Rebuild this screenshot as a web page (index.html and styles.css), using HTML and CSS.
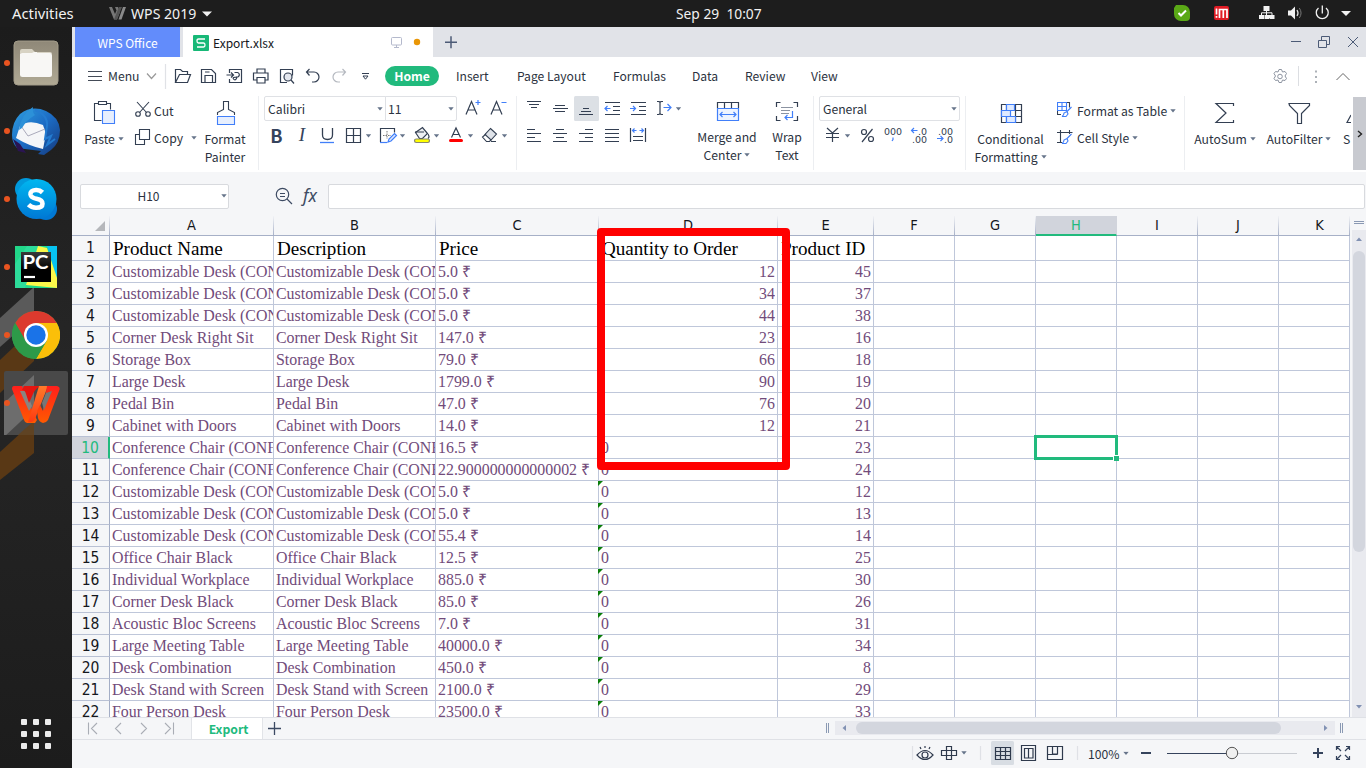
FILE: index.html
```html
<!DOCTYPE html>
<html lang="en">
<head>
<meta charset="utf-8">
<title>Export.xlsx - WPS Office</title>
<link rel="stylesheet" href="styles.css">
</head>
<body>
<svg class="defs" width="0" height="0">
  <defs>
    <linearGradient id="gFiles" x1="0" y1="0" x2="0" y2="1"><stop offset="0" stop-color="#8f8878"/><stop offset="1" stop-color="#b0a994"/></linearGradient>
    <linearGradient id="gBird" x1="0" y1="0" x2="1" y2="1"><stop offset="0" stop-color="#2f9fe0"/><stop offset=".5" stop-color="#1c6bc4"/><stop offset="1" stop-color="#15397c"/></linearGradient>
    <linearGradient id="gSkype" x1="0" y1="0" x2="0" y2="1"><stop offset="0" stop-color="#00b7f0"/><stop offset="1" stop-color="#0078d4"/></linearGradient>
    <linearGradient id="gWps" x1="0" y1="0" x2="0" y2="1"><stop offset="0" stop-color="#ff1f1c"/><stop offset="1" stop-color="#ff5a00"/></linearGradient>
    <linearGradient id="gWps2" x1="0" y1="0" x2="0" y2="1"><stop offset="0" stop-color="#ff7a2a"/><stop offset="1" stop-color="#ff3a10"/></linearGradient>
    <linearGradient id="gPc" x1="0" y1="0" x2="0" y2="1"><stop offset="0" stop-color="#3a3a3a"/><stop offset=".6" stop-color="#000"/></linearGradient>
    <symbol id="caret" viewBox="0 0 6 4"><path d="M.3 .3h5.4L3 3.4z" fill="#66748a" stroke="none"/></symbol>
  </defs>
</svg>

<header class="topbar">
  <span class="activities">Activities</span>
  <svg class="wps-mini" width="17" height="13" viewBox="0 0 17 13"><path d="M0 0h3l3 7 1.500-3.500L6 0h3l2 5-3 7.500H5z" fill="#777"/><path d="M5 12.500 10 0h3L8 12.500z" fill="#555"/><path d="M9.500 12.500 14 0h3l-4.500 12.500z" fill="#8a8a8a"/></svg>
  <span class="appname">WPS 2019</span>
  <svg width="10" height="6" viewBox="0 0 10 6"><path d="M0 .5h10L5 5.500z" fill="#f2f2f2"/></svg>
  <span class="clock">Sep 29&nbsp; 10:07</span>
  <svg class="tray" width="196" height="27" viewBox="1170 0 196 27">
    <path d="M1176 5h7a7 7 0 0 1 7 7v5a4 4 0 0 1-4 4h-5a7 7 0 0 1-7-7V8z" fill="#5aa816"/><path d="m1178.500 13 2.500 2.500 5-5" fill="none" stroke="#fff" stroke-width="2"/>
    <rect x="1214" y="6" width="15" height="14" rx="2" fill="#e01b24"/><path d="M1216.500 8.500v6M1216.500 16v1.800M1219.500 18V9.500h7.500V18M1223.300 9.500V18" stroke="#fff" stroke-width="1.700" fill="none"/>
    <path d="M1263.500 6h6v5h-6zM1259 15h5v4h-5zM1264.500 15h5v4h-5zM1269.500 15h5v4h-5z" fill="#f2f2f2"/><path d="M1266.500 10v5M1261.500 15v-2.200h10.500V15" fill="none" stroke="#f2f2f2"/>
    <path d="M1288 10.500h3l4-4v13l-4-4h-3z" fill="#f2f2f2"/><path d="M1297 10q2 3 0 6" fill="none" stroke="#ddd" stroke-width="1.300"/><path d="M1299.300 8q3.500 5 0 10" fill="none" stroke="#777"/>
    <path d="M1318.500 8a6 6 0 1 0 7.500 0M1322.300 5.500v8" fill="none" stroke="#f2f2f2" stroke-width="1.300"/>
    <path d="M1341 11h10l-5 5z" fill="#f2f2f2"/>
  </svg>
</header>

<div class="desktop">
  <nav class="dock">
    <svg class="wallpaper" width="72" height="741" viewBox="0 27 72 741"><path d="M34 287 0 318v29l34-30z" fill="#5a5a5a"/><path d="M34 328 0 360v33l34-32z" fill="#593815"/><path d="M34 421 0 452v28l34-27z" fill="#593815"/></svg>
    <div class="dock-item"><i></i><svg width="48" height="48" viewBox="12 39 48 48"><rect x="14" y="41" width="44" height="44" rx="4" fill="url(#gFiles)" stroke="#a39c8a"/><path d="M20 54v-3a2 2 0 0 1 2-2h10l3 3h15a2 2 0 0 1 2 2z" fill="#d8d3c4"/><rect x="20" y="53" width="32" height="24" rx="2.500" fill="#f8f7f5"/><path d="M20 58v-4h10l4-2h3v6z" fill="#f8f7f5"/></svg></div>
    <div class="dock-item"><i></i><svg width="48" height="48" viewBox="12 107 48 48"><path d="M20 114q12-9 26-3 13 6 14 19 0 13-9 20l-7 5-6-1 3-3-24-3q-5-5-5-13 0-13 8-21z" fill="url(#gBird)"/><path d="m13 139 5 12 8 2-6-9z" fill="#2a1452"/><path d="M20 126q9-7 23-1l3 9-3 15q-14-3-27-11z" fill="#f5f6f8"/><path d="m21 126 7 10 17-7" fill="none" stroke="#aab" /><path d="M19 130q2-16 14-23-1 5 2 8-5 3-9 7l-4 6z" fill="#2c91d8"/><path d="M35 110q13 5 12 16l-2 13 6-3-4 9 8-6" fill="none" stroke="#247bd0" stroke-width="2"/></svg></div>
    <div class="dock-item"><i></i><svg width="48" height="48" viewBox="12 175 48 48"><circle cx="26" cy="189" r="11" fill="#0099dc"/><circle cx="46" cy="209" r="11" fill="#0078d4"/><circle cx="36.500" cy="199" r="20" fill="url(#gSkype)"/><path d="M42.500 192.500q-3-3-7-2.500-5.500.5-5 4.500.5 3.200 6 4.200 6 1 6 5t-6.500 4q-4.500 0-7.500-3" fill="none" stroke="#fff" stroke-width="4.600"/></svg></div>
    <div class="dock-item"><i></i><svg width="48" height="48" viewBox="12 243 48 48"><path d="M15 246h42v42H15z" fill="#21d789"/><path d="m15 264 12-18h-12zM15 246h28l-18 42H15z" fill="#2ddc9a"/><path d="m47 246 10 34v-34z" fill="#07c3f2"/><path d="m38 246 9 2 10 30v10l-31-3z" fill="#fcf84a"/><path d="M21 252h30v30H21z" fill="url(#gPc)"/><text class="pc" x="22.500" y="269" textLength="26" lengthAdjust="spacingAndGlyphs">PC</text><path d="M24 277h11" stroke="#fff" stroke-width="2.200"/></svg></div>
    <div class="dock-item"><i></i><svg width="48" height="48" viewBox="12 311 48 48"><circle cx="36" cy="335" r="24" fill="#2d9a49"/><path d="M36 335 15.200 323a24 24 0 0 1 41.600 0z" fill="#dc3a2e"/><path d="M36 323h20.800A24 24 0 0 1 36 359l10.500-18z" fill="#fbbf09"/><path d="m15.200 323 10.500 18 10.300-6V323z" fill="#dc3a2e"/><path d="m15.200 323 10.400 18L36 347l10.400-6L36 359a24 24 0 0 1-20.800-36z" fill="#2d9a49"/><circle cx="36" cy="335" r="12" fill="#fff"/><circle cx="36" cy="335" r="9.700" fill="#1a73e8"/></svg></div>
    <div class="dock-item"><svg width="64" height="64" viewBox="4 371 64 64"><rect x="4" y="371" width="64" height="64" rx="2" fill="#494949"/><path d="M34 375 4 403v34l30-28z" fill="#6d6d6d"/><path d="M34 421 18 435h16z" fill="#5f4323"/><circle cx="7" cy="403" r="3" fill="#e95420"/><path d="M14 386h8l10 24 5 10-2 3h-8q-2 0-3-3L12 389q0-3 2-3z" fill="url(#gWps)"/><path d="M20 391h6l6 15-3 5z" fill="#8a8480"/><path d="M24 386h16q-5 3-7 8l-4 9-3-9q-1-4-4-4z" fill="#e5140f"/><path d="M39 386h9L35 419q-2 4-7 3z" fill="url(#gWps2)"/><path d="M47 386h10q4 1 2 5L48 420q-2 3-5 3-4-1-5-5l-1-7 3-6 3 6z" fill="url(#gWps)"/><path d="m46 393 6-2-8 19-2-7z" fill="#777"/></svg></div>
    <svg class="apps" width="32" height="32" viewBox="20 718 32 32" fill="#ececec"><g id="ar"><rect x="21" y="719" width="6" height="6" rx="1"/><rect x="33" y="719" width="6" height="6" rx="1"/><rect x="45" y="719" width="6" height="6" rx="1"/></g><use href="#ar" y="12"/><use href="#ar" y="24"/></svg>
  </nav>

  <main class="app">
    <div class="tabs">
      <div class="tab-home">WPS Office</div>
      <div class="tab-doc">
        <svg class="doc-icon" width="16" height="16" viewBox="0 0 16 16"><rect width="16" height="16" rx="1" fill="#17b877"/><path d="M12 4H5.500q-1.500 0-1.500 2t1.500 2h5Q12 8 12 10t-1.500 2H4" fill="none" stroke="#fff" stroke-width="1.300"/></svg>
        <span class="doc-name">Export.xlsx</span>
        <svg width="32" height="14" viewBox="390 36 32 14"><rect x="391.500" y="38.500" width="10" height="7.500" rx="1" fill="none" stroke="#b4b9cc"/><path d="M396.500 46v2.500M394 48.500h5" stroke="#b4b9cc"/><circle cx="417" cy="43" r="3.200" fill="#e99606"/></svg>
      </div>
      <svg width="36" height="30" viewBox="433 27 36 30"><path d="M445 42.200h12M451 36.200v12" stroke="#4c5b76" stroke-width="1.500"/></svg>
      <svg class="push" width="84" height="30" viewBox="1282 27 84 30" fill="none" stroke="#4c5b76"><path d="M1291 41.500h10M1318.500 40.500h8v7h-8zM1321.500 40v-3.500h8v8h-3M1348 37l10 10M1358 37l-10 10"/></svg>
    </div>

    <div class="menubar">
      <svg width="36" height="38" viewBox="72 57 36 38"><path d="M88 71.500h14M88 76.500h14M88 80.500h14" stroke="#444b57"/></svg>
      <span class="menu-label">Menu</span>
      <svg width="247" height="38" viewBox="138 57 247 38" fill="none" stroke="#333f52" stroke-width="1.200">
        <path d="m147 73.500 4.500 5 4.500-5" stroke="#999"/><path d="M165.500 64v25" stroke="#e0e2e6"/>
        <path d="M175.500 82.500v-13h5l2 2h5v3.500M175.500 82.500l4-8h11l-3 8z"/>
        <path d="M201.500 69.500h10l4 4v9h-14zM205 82v-6.500h7.500V82M205 72h4.500"/>
        <path d="M229.500 73v-3.500h12v13h-12V79M226.500 75h7M231 72.500l2.500 2.500-2.500 2.500M234.500 72.500h3a2 2 0 1 1-1 4.500v1.500q-1.500 2.500-3 .5t3.500-2"/>
        <path d="M257 73v-4h8v4M256.500 80h-3v-7h14.500v7h-3M257 77.500h8v5.500h-8z"/>
        <path d="M287 82.500h-6.500v-13h12v6"/><circle cx="288" cy="77" r="4" fill="#e4e7ee"/><path d="m291 80 3 3.500"/>
        <path d="m309.500 69-3 3 3 3.500M306.500 72h7.500a4.800 4.800 0 0 1 0 10h-2"/>
        <path d="m342.500 69 3 3-3 3.500M345.500 72h-7.500a4.800 4.800 0 0 0 0 10h2" stroke="#b5b9c0"/>
        <path d="M362 73.500h7M363 76l2.500 3.200 2.500-3.200z" stroke-width="1"/>
      </svg>
      <span class="pill">Home</span>
      <span class="m m1">Insert</span><span class="m m2">Page Layout</span><span class="m m3">Formulas</span><span class="m m4">Data</span><span class="m m5">Review</span><span class="m">View</span>
      <svg class="push" width="98" height="38" viewBox="1268 57 98 38" fill="none" stroke="#8c93a0"><path d="m1278 72 1-2.500h2.500l1 2.500 2.500-.5 1.500 2-1.500 2.500 1.500 2.500-1.500 2-2.500-.5-1 2.500h-2.500l-1-2.500-2.500.5-1.500-2 1.500-2.500-1.500-2.500 1.500-2z"/><circle cx="1280" cy="76.500" r="2.300"/><path d="M1298.500 66v20" stroke="#dcdee2"/><path d="M1315.500 71.500h1M1315.500 77h1M1315.500 82h1" stroke="#5b6470" stroke-width="2"/><path d="m1336.500 80 6.500-6.500 6.500 6.500" stroke="#666"/></svg>
    </div>

    <div class="ribbon">
      <section class="group g-clip">
        <div class="big paste"><svg width="28" height="28" viewBox="90 99 28 28" fill="none" stroke="#333f52" stroke-width="1.100"><path d="M98 103.500h-3.500v17h7M107 103.500h3.500v6"/><path d="M98.500 101.500h8v3h-8z"/><path d="M102.500 110.500h12v13h-12z" fill="#e7effe" stroke="#417ff9"/></svg><span>Paste<svg class="c"><use href="#caret"/></svg></span></div>
        <div class="stack">
          <div class="small"><svg width="19" height="24" viewBox="134 97 19 24" fill="none" stroke="#333f52" stroke-width="1.100"><path d="m137 102 9.500 10.500M149 102l-9.500 10.500"/><circle cx="138" cy="114" r="2.300"/><circle cx="148" cy="114" r="2.300"/></svg><span>Cut</span></div>
          <div class="small"><svg width="19" height="24" viewBox="134 124 19 24" fill="none" stroke="#333f52" stroke-width="1.100"><path d="M139.500 129.500h10v10h-10zM139 134.500h-3.500v10h9V140"/></svg><span>Copy<svg class="c far"><use href="#caret"/></svg></span></div>
        </div>
        <div class="big painter"><svg width="28" height="28" viewBox="211 99 28 28" fill="none" stroke="#333f52" stroke-width="1.100"><path d="M217.500 115v-2.500l6-3v-8h5v8l6 3v2.500"/><path d="M217.500 116.500h17v8h-17z" fill="#e7effe" stroke="#417ff9"/></svg><span>Format<br>Painter</span></div>
      </section>

      <section class="group g-font">
        <div class="row selects"><div class="select fontsel">Calibri<svg class="c"><use href="#caret"/></svg></div><div class="select sizesel">11<svg class="c"><use href="#caret"/></svg></div>
          <svg width="56" height="25" viewBox="457 96 56 25" fill="none" stroke="#333f52" stroke-width="1.200"><path d="m466 114.500 5.500-13 5.500 13M468 110h7M491 114.500l5.500-13 5.500 13M493 110h7"/><path d="M475.500 102.500h5M478 100v5M501.500 102.500h5" stroke="#417ff9"/></svg></div>
        <div class="row tools">
          <span class="bold">B</span><span class="ital">I</span>
          <svg width="26" height="26" viewBox="315 122 26 26" fill="none" stroke="#333f52" stroke-width="1.300"><path d="M322.500 128v7q0 4.500 5 4.500t5-4.500v-7"/><path d="M320 142.500h14" stroke="#417ff9"/></svg>
          <svg width="34" height="26" viewBox="341 122 34 26" fill="none" stroke="#333f52" stroke-width="1.200"><path d="M346.500 128.500h14v14h-14zM353.500 128v14M346 135.500h14"/><use href="#caret" x="365.500" y="134" width="6" height="4"/></svg>
          <svg width="34" height="26" viewBox="375 122 34 26" fill="none" stroke="#333f52" stroke-width="1.200"><path d="M380.500 142v-13.500h14v4"/><path d="M380 142.500h7" stroke="#417ff9"/><path d="M387 131v8M383 135.500h8" stroke-dasharray="1.500 1" stroke="#777" stroke-width="1"/><path d="m388 142 1-3 5.500-5.500 2 2-5.500 5.500z" fill="#dbe7ff" stroke="#417ff9"/><use href="#caret" x="399.500" y="134" width="6" height="4"/></svg>
          <svg width="34" height="26" viewBox="409 122 34 26" fill="none" stroke="#333f52" stroke-width="1.200"><path d="m415.500 132.500 7-5 5 6-5 5h-3z" fill="#eef0f3"/><path d="M415 132h9M428 134q2 3 0 4.500"/><rect x="414.500" y="139" width="15" height="3.500" rx="1.700" fill="#ff0" stroke="#8a8a70"/><use href="#caret" x="433.500" y="134" width="6" height="4"/></svg>
          <svg width="34" height="26" viewBox="443 122 34 26" fill="none" stroke="#333f52" stroke-width="1.200"><path d="m451.500 137.500 4.500-9.500 4.500 9.500M453 134.500h6"/><rect x="449" y="139" width="14" height="3" rx="1.500" fill="red" stroke="none"/><use href="#caret" x="467.500" y="134" width="6" height="4"/></svg>
          <svg width="36" height="26" viewBox="477 122 36 26" fill="none" stroke="#333f52" stroke-width="1.100"><path d="m490.500 128.500 6 5.500-5.500 6-6-5.500z" fill="#dfe3e9"/><path d="m486 134-3.500 3 4 4.500h3l2-2M491 141.500h5"/><use href="#caret" x="501.500" y="134" width="6" height="4"/></svg>
        </div>
      </section>

      <section class="group g-align">
        <div class="colrows">
          <div class="row top">
            <svg width="26" height="25" viewBox="521 96 26 25" class="ln"><path d="M527 101.500h14M529 104.500h10M531 107.500h6"/></svg>
            <svg width="26" height="25" viewBox="547 96 26 25" class="ln"><path d="M555 105.500h10M553 108.500h15M555 111.500h10"/></svg>
            <svg width="26" height="25" viewBox="573 96 26 25" class="ln"><rect x="574" y="96" width="25" height="25" rx="1.500" fill="#dce0e5" stroke="none"/><path d="M583 108.500h6M581 111.500h10M579 114.500h14"/></svg>
            <svg width="26" height="25" viewBox="599 96 26 25" class="ln"><path d="M605 102.500h15M613 106.500h7M613 110.500h7M605 114.500h15"/><path class="blue" d="M604.500 108.500h6M607.500 106l-2.500 2.500 2.500 2.500"/></svg>
            <svg width="26" height="25" viewBox="625 96 26 25" class="ln"><path d="M631 102.500h15M639 106.500h7M639 110.500h7M631 114.500h15"/><path class="blue" d="M630 108.500h6M633 106l2.500 2.500-2.500 2.500"/></svg>
            <svg width="35" height="25" viewBox="651 96 35 25" class="ln"><path d="M657 101.500h2l1 1 1-1h2M660 102v12M657 114.500h2l1-1 1 1h2"/><path class="blue" d="M663.500 107.500h7M667.500 104l3.500 3.500-3.500 3.500"/><use href="#caret" x="675.500" y="107" width="6" height="4"/></svg>
          </div>
          <div class="row">
            <svg width="26" height="26" viewBox="521 122 26 26" class="ln"><path d="M527 129.500h8M527 133.500h14M527 137.500h8M527 141.500h14"/></svg>
            <svg width="26" height="26" viewBox="547 122 26 26" class="ln"><path d="M556 129.500h8M553 133.500h14M556 137.500h8M553 141.500h14"/></svg>
            <svg width="26" height="26" viewBox="573 122 26 26" class="ln"><path d="M585 129.500h8M579 133.500h14M585 137.500h8M579 141.500h14"/></svg>
            <svg width="26" height="26" viewBox="599 122 26 26" class="ln"><path d="M605 129.500h14M605 133.500h14M605 137.500h14M605 141.500h14"/></svg>
            <svg width="26" height="26" viewBox="625 122 26 26" class="ln"><path d="M630.500 128v14M645.500 128v14M633 136.500h10M633 140.500h10"/><path class="blue" d="M632.500 130.500h4M639.500 130.500h4M634.500 128.500l-2 2 2 2M641.500 128.500l2 2-2 2"/></svg>
          </div>
        </div>
        <div class="big up merge"><svg width="28" height="28" viewBox="713 99 28 28" fill="none" stroke="#333f52" stroke-width="1.200"><path d="M717.500 108v-5.500h21v5.500M724.500 102v6M731.500 102v6"/><path d="M717.500 108.500h21v12h-21z" fill="#eef4ff" stroke="#417ff9"/><path d="M720 114.500h16M722.500 112l-2.500 2.500 2.500 2.500M733.500 112l2.500 2.500-2.500 2.500" stroke="#417ff9"/></svg><span>Merge and<br>Center<svg class="c"><use href="#caret"/></svg></span></div>
        <div class="big up wrap"><svg width="28" height="28" viewBox="773 99 28 28" fill="none" stroke="#333f52" stroke-width="1.200"><path d="M776.500 107v-4.500h4M793.500 102.500h4v4.500M776.500 116v4.500h4M793.500 120.500h4V116"/><path d="M781 107.500h12M781 110.500h9M781 113.500h8" stroke="#8b93a1"/><path d="M792.500 111v6.500h-7M787.500 115l-2.500 2.500 2.500 2.500" stroke="#417ff9"/></svg><span>Wrap<br>Text</span></div>
      </section>

      <section class="group g-num">
        <div class="select numsel">General<svg class="c"><use href="#caret"/></svg></div>
        <svg width="144" height="26" viewBox="819 122 144 26" class="ln">
          <path d="m827 128 5.500 5 5.500-5M826 133.500h13M826 137.500h13M832.500 133v9"/><use href="#caret" x="844.500" y="134" width="6" height="4"/>
          <circle cx="864" cy="132" r="2.500"/><circle cx="871" cy="139" r="2.500"/><path d="m862 142 10.500-13"/>
          <text x="884" y="135" textLength="18">000</text><path class="blue" d="M893 137.500v2l-1 1.500" />
          <text x="918" y="134.500" textLength="9">.0</text><text x="912" y="143" textLength="15">.00</text><path class="blue" d="M911.500 130.500h6M914 128l-2.500 2.500 2.500 2.500"/>
          <text x="938" y="134.500" textLength="15">.00</text><text x="944" y="143" textLength="9">.0</text><path class="blue" d="M937 138.500h6M940.500 136l2.500 2.500-2.500 2.500"/>
        </svg>
      </section>

      <section class="group g-style">
        <div class="big cond"><svg width="28" height="28" viewBox="996 99 28 28" fill="none" stroke="#333f52" stroke-width="1.200"><path d="M1000.500 104.500h20v18h-20zM1000 110.500h20M1000 116.500h20M1005.500 104v18M1014.500 104v18"/><path d="M1005.500 104.500h8v6h-8zM1000.500 110.500h9v6h-9zM1005.500 116.500h9v6h-9z" fill="#dfeaff" stroke="#417ff9"/></svg><span>Conditional<br>Formatting<svg class="c"><use href="#caret"/></svg></span></div>
        <div class="stack">
          <div class="small"><svg width="20" height="24" viewBox="1057 97 20 24" fill="none" stroke="#333f52" stroke-width="1.100"><path d="M1061 114.500h-3.500V110M1067 102.500h2.500v5"/><path d="M1057.500 102.500h9v8h-9zM1062 102v8M1057 106.500h9" stroke="#417ff9"/><path d="m1071.500 107-5 5M1067 111.500l1 2.500-2 2.500h-4q2-1 2-3.500z" stroke="#417ff9"/></svg><span>Format as Table<svg class="c"><use href="#caret"/></svg></span></div>
          <div class="small"><svg width="20" height="24" viewBox="1057 124 20 24" fill="none" stroke="#333f52" stroke-width="1.100"><path d="M1057 132.500h15.500M1060.500 130v12.500M1057 142.500h5M1069.500 130v4"/><path d="m1071.500 134-5 5M1067 138.500l1 2.500-2 2.500h-4q2-1 2-3.500z" stroke="#417ff9"/></svg><span>Cell Style<svg class="c"><use href="#caret"/></svg></span></div>
        </div>
      </section>

      <section class="group g-edit">
        <div class="big sum"><svg width="28" height="28" viewBox="1211 99 28 28" fill="none" stroke="#333f52" stroke-width="1.200"><path d="M1233.500 106v-2.500H1216l10 9.500-10 9.500h17.500V120"/></svg><span>AutoSum<svg class="c"><use href="#caret"/></svg></span></div>
        <div class="big filt"><svg width="28" height="28" viewBox="1285 99 28 28" fill="none" stroke="#333f52" stroke-width="1.200"><path d="M1289 103.500h20.500v2l-8 8v10h-4v-10l-8-8z"/></svg><span>AutoFilter<svg class="c"><use href="#caret"/></svg></span></div>
        <div class="big sort"><svg width="8" height="28" viewBox="1343 99 8 28" fill="none" stroke="#333f52" stroke-width="1.200"><path d="m1351 115-4 7.500h4"/></svg><span>S</span></div>
      </section>
      <div class="scroll-btn"><svg width="6" height="8" viewBox="0 0 6 8"><path d="m1 1 3.500 3L1 7" fill="none" stroke="#222" stroke-width="1.400"/></svg></div>
    </div>

    <div class="formula">
      <div class="namebox"><span>H10</span><svg class="c"><use href="#caret"/></svg></div>
      <svg width="99" height="26" viewBox="229 183 99 26" fill="none" stroke="#3d4b63" stroke-width="1.200"><circle cx="282.500" cy="194.500" r="6.200"/><path d="m287 199 5 5M280 193.500h5M280 196.500h5"/><text class="fx" x="303" y="201.500">fx</text></svg>
      <div class="fin"></div>
    </div>

    <div class="sheet">
      <div class="grid" id="grid"></div>
      <div class="vbar"><svg width="16" height="14" viewBox="1350 216 16 14"><path d="M1354 221.500h10M1354 223.500h10" stroke="#8a99b3"/></svg><div class="vtrack"><svg width="6" height="4" viewBox="0 0 6 4"><path d="M0 4h6L3 .5z" fill="#8191b3"/></svg><div class="vthumb"></div><svg class="down" width="6" height="4" viewBox="0 0 6 4"><path d="M0 0h6L3 3.500z" fill="#8191b3"/></svg></div></div>
      <div class="selection"></div><div class="handle"></div>
      <div class="annotation"></div>
    </div>

    <div class="sheetbar">
      <svg width="119" height="21" viewBox="72 718 119 21" fill="none" stroke="#a9adb5" stroke-width="1.100"><path d="M88.500 722.500v12M97 723l-5.500 5.500 5.500 5.500M121 723l-5.500 5.500 5.500 5.500M141 723l5.500 5.500-5.500 5.500M165 723l5.500 5.500-5.500 5.500M173.500 722.500v12"/></svg>
      <div class="sheet-tab">Export</div>
      <svg width="30" height="21" viewBox="263 718 30 21"><path d="M268 728.500h13M274.500 722v13" stroke="#3c4a63" stroke-width="1.300"/></svg>
      <svg class="grip" width="10" height="21" viewBox="825 718 10 21"><path d="M826.500 723v10M828.500 723v10" stroke="#8a99b3"/></svg>
      <div class="htrack"><svg width="4" height="6" viewBox="0 0 4 6"><path d="M4 0v6L.5 3z" fill="#8191b3"/></svg><div class="hthumb"></div><svg class="right" width="4" height="6" viewBox="0 0 4 6"><path d="M0 0v6l3.500-3z" fill="#8191b3"/></svg></div>
      <svg width="31" height="21" viewBox="1335 718 31 21"><path d="M1340.500 723v10M1342.500 723v10" stroke="#8a99b3"/></svg>
    </div>

    <footer class="status">
      <svg width="178" height="28" viewBox="910 740 178 28" fill="none" stroke="#2f3a4d" stroke-width="1.200">
        <path d="M912.500 746v14M980.500 746v14M1077.500 746v14" stroke="#dfe1e6"/>
        <path d="M917 755q8-9 16 0-8 9-16 0z"/><circle cx="925" cy="755" r="3"/><path d="M925 746v2M920 747l1 2M930 747l-1 2"/>
        <path d="M946.500 746.500h5v13h-5zM941.500 750.500h15v5h-15z"/><use href="#caret" x="961" y="751" width="6" height="4"/>
        <rect x="991" y="741" width="23" height="24" rx="1.500" fill="#d8dde3" stroke="none"/><path d="M995.500 747.500h15v12h-15zM995 751.500h15M995 755.500h15M1000.500 747v12M1005.500 747v12"/>
        <path d="M1021.500 745.500h14v15h-14zM1024.500 748.500h8.500v9.500h-8.500zM1028.500 748v10"/>
        <path d="M1047.500 746.500h15v13h-15zM1052.500 746v8h5v-8M1047 754.500h10.500"/>
      </svg>
      <span class="zoom">100%</span>
      <svg width="244" height="28" viewBox="1122 740 244 28" fill="none" stroke="#35435c"><use href="#caret" x="1123" y="751.500" width="6" height="4"/><path d="M1141 753h10M1313 753h10M1318 748v10" stroke-width="2"/><path d="M1167 753.500h65"/><path d="M1232 753.500h65" stroke="#c9ccd2"/><circle cx="1232" cy="753" r="5.700" fill="#f0f0f0" stroke="#555"/><path d="M1336.500 750v-3.500h3.500M1337 747l4 4M1346 746.500h3.500v3.500M1349 747l-4 4M1336.500 756v3.500h3.500M1337 759l4-4M1346 759.500h3.500V756M1349 759l-4-4" stroke-width="1.200"/></svg>
    </footer>
  </main>
</div>
<script src="app.js"></script>
</body>
</html>
```
FILE: styles.css
```css
* { box-sizing: border-box; }
body { margin: 0; width: 1366px; height: 768px; overflow: hidden; display: flex; flex-direction: column; font: 12.200px/18px "Noto Sans CJK SC", "Noto Sans", sans-serif; color: #2b3240; background: #f5f6f8; }
svg { display: block; flex: none; }
.defs { position: absolute; }

.topbar { height: 27px; flex: none; background: #1d1d1d; display: flex; align-items: center; color: #f2f2f2; font: 14.800px/27px "Noto Sans", sans-serif; white-space: nowrap; }
.activities { width: 96px; padding-left: 12px; }
.wps-mini { margin-left: 13px; margin-right: 5px; }
.appname { width: 71px; font-size: 14.100px; }
.clock { margin-left: 464px; font-size: 13.800px; width: 96px; }
.tray { margin-left: auto; }

.desktop { display: flex; height: 741px; }
.dock { position: relative; width: 72px; flex: none; display: flex; flex-direction: column; padding-top: 2px; background: linear-gradient(#1c1c1c, #262626 45%, #1c1c1c); }
.wallpaper { position: absolute; left: 0; top: 0; }
.dock-item { position: relative; height: 68px; display: flex; align-items: center; justify-content: center; }
.dock-item i { position: absolute; left: 4px; top: 31px; width: 6px; height: 6px; border-radius: 3px; background: #e95420; }
.pc { font: bold 18px Lato, sans-serif; fill: #fff; }
.apps { margin: auto auto 18px; }

.app { width: 1294px; display: flex; flex-direction: column; }
.tabs { height: 30px; display: flex; background: #e1e3e8; padding-left: 3px; }
.tab-home { width: 105px; background: #628cfb; color: #fff; font-size: 12px; line-height: 32px; text-align: center; margin-right: 3px; }
.tab-doc { width: 250px; background: #fff; display: flex; align-items: center; padding-left: 10px; color: #15171c; }
.doc-icon { margin-top: 2px; }
.doc-name { width: 181px; padding: 1px 0 0 4px; font-size: 12px; }
.push { margin-left: auto; }

.menubar { height: 39px; background: #fff; display: flex; align-items: center; padding-bottom: 1px; }
.menu-label { width: 30px; white-space: nowrap; }
.pill { width: 54px; height: 20px; border-radius: 10px; background: #21ba7d; color: #fff; font-weight: bold; line-height: 20px; text-align: center; margin-right: 17px; }
.m { white-space: nowrap; font-size: 12.100px; }
.m1 { width: 61px; } .m2 { width: 96px; } .m3 { width: 79px; } .m4 { width: 53px; } .m5 { width: 66px; }

.ribbon { height: 76px; background: #fff; display: flex; white-space: nowrap; }
.group { height: 74px; flex: none; border-right: 1px solid #eceef1; display: flex; }
.c { display: inline-block; width: 6px; height: 4px; margin: 0 0 3px 3px; }
.c.far { margin-left: 8px; }
.big { display: flex; flex-direction: column; align-items: center; padding-top: 3px; text-align: center; flex: none; }
.big > span { margin-top: 3px; }
.big.up > span { margin-top: 1px; }
.stack { display: flex; flex-direction: column; padding-top: 1px; gap: 3px; }
.small { display: flex; height: 24px; align-items: center; }
.small > span { padding: 4px 0 0 1px; }
.g-style .small > span { padding-left: 0; }
.row { display: flex; align-items: center; }
.g-clip { width: 187px; padding-left: 8px; }
.paste { width: 48px; margin-right: 6px; }
.g-clip .stack { width: 66px; }
.painter { width: 50px; }
.g-font { width: 258px; padding-left: 5px; flex-direction: column; }
.select { height: 25px; border: 1px solid #dfe1e5; border-radius: 2px; padding-left: 3px; line-height: 26px; display: flex; align-items: center; justify-content: space-between; background: #fff; }
.select .c { margin: 0 2px 0 0; }
.fontsel { width: 122px; border-radius: 2px 0 0 2px; }
.sizesel { width: 72px; margin-left: -1px; border-radius: 0 2px 2px 0; padding-left: 2px; }
.tools { height: 26px; margin-top: 1px; }
.bold { width: 25px; padding-bottom: 1px; text-align: center; font-size: 18px; font-weight: bold; color: #35435c; }
.ital { width: 26px; text-align: center; font: italic 19px "Liberation Serif", serif; color: #35435c; }
.g-align { width: 297px; padding-left: 4px; }
.colrows { width: 175px; display: flex; flex-direction: column; gap: 1px; }
.ln { fill: none; stroke: #333f52; stroke-width: 1.200; }
.ln .blue { stroke: #417ff9; }
.ln text { stroke: none; fill: #333f52; font: 9.500px "DejaVu Sans", sans-serif; }
.merge { width: 62px; margin-right: 4px; }
.wrap { width: 50px; }
.g-num { width: 152px; padding-left: 5px; flex-direction: column; gap: 1px; }
.numsel { width: 141px; }
.g-style { width: 219px; padding-left: 8px; }
.cond { width: 73px; margin-right: 10px; }
.g-edit { width: 168px; padding-left: 8px; border: 0; overflow: hidden; }
.sum { width: 64px; margin-right: 8px; }
.filt { width: 68px; margin-right: 10px; }
.sort { width: 9px; align-items: flex-start; }
.scroll-btn { width: 13px; height: 73px; margin-top: 1px; background: #c8cad0; display: flex; align-items: center; justify-content: center; }

.formula { height: 44px; display: flex; align-items: center; padding-left: 8px; padding-top: 4px; background: #f5f6f8; }
.namebox { width: 149px; height: 25px; border: 1px solid #d8dade; border-radius: 2px; background: #fff; display: flex; align-items: center; font-size: 12px; }
.namebox span { flex: 1; text-align: center; padding-right: 5px; }
.namebox .c { margin: 0 1px 0 0; }
.fx { font: italic 17.500px "Noto Sans", sans-serif; fill: #3d4b63; stroke: none; }
.fin { flex: 1; height: 25px; background: #fff; border: 1px solid #d8dade; border-radius: 2px; margin-right: 1px; }

.sheet { position: relative; display: flex; height: 501px; overflow: hidden; }
.grid { width: 1278px; flex: none; background: #fff; }
.grid-row { display: grid; grid-template-columns: 38px 164px 162px 163px 179px 96px 81px 81px 81px 81px 81px 71px; grid-template-rows: 100%; height: 22px; }
.grid-row.letters { height: 20px; }
.grid-row.first { height: 25px; }
.letter, .num { font: 15.500px/22px "DejaVu Sans Condensed", "DejaVu Sans", sans-serif; font-stretch: condensed; text-align: center; color: #15171c; background: #f5f6f8; }
.letter { border-bottom: 1px solid #a4aec6; border-right: 1px solid; border-image: linear-gradient(#f5f6f8, #a4aec6) 1; font-size: 14.500px; line-height: 19px; }
.letter:last-child { padding-left: 11px; }
.letter.on { background: #d1d4dc; color: #21ba7d; border-image: none; border-right-color: #d1d4dc; border-bottom: 2px solid #21ba7d; }
.corner { display: flex; justify-content: flex-end; align-items: flex-end; padding: 0 4px 4px 0; }
.num { border-right: 1px solid #a4aec6; border-bottom: 1px solid; border-bottom-color: #b9c1d4; }
.first .num { line-height: 25px; }
.num.on { background: #d1d4dc; color: #21ba7d; border-right: 2px solid #21ba7d; }
.cell { position: relative; min-width: 0; border-right: 1px solid #bfc7da; border-bottom: 1px solid #bfc7da; color: #714b7a; font: 15.900px/22px "Liberation Serif", serif; padding: 0 2px; }
.cell span { display: block; overflow: hidden; white-space: nowrap; margin-right: -2px; height: 21px; }
.cell.r span { text-align: right; margin-right: 0; }
.first .cell { color: #000; font-size: 19.100px; line-height: 26px; padding-left: 3px; }
.first .cell span { height: 24px; }
.cell.flag::before { content: ""; position: absolute; left: -1px; top: 0; border-top: 5px solid #0a7d0a; border-right: 5px solid transparent; }

.vbar { width: 16px; background: #f5f6f8; }
.vtrack { height: 487px; margin-left: 2px; background: #e9eaef; display: flex; flex-direction: column; align-items: center; padding: 7px 0 8px; }
.vthumb { width: 12px; height: 301px; margin-top: 10px; border-radius: 6px; background: #d3d6de; }
.down { margin-top: auto; }
.selection { position: absolute; left: 962px; top: 219px; width: 84px; height: 25px; border: 3px solid #21ba7d; }
.handle { position: absolute; left: 1041px; top: 239px; width: 6px; height: 6px; background: #21ba7d; border: solid #fff; border-width: 1px 0 0 1px; }
.annotation { position: absolute; left: 525px; top: 12px; width: 193px; height: 242px; border: 8px solid #f00; border-radius: 4px; }

.sheetbar { height: 22px; border-top: 1px solid #dfe1e6; display: flex; align-items: flex-start; background: #f5f6f8; }
.sheet-tab { width: 72px; height: 21px; background: #fff; border: solid #e2e4e8; border-width: 0 1px; padding-left: 3px; color: #21ba7d; font-weight: bold; line-height: 22px; text-align: center; }
.grip { margin-left: 532px; }
.htrack { width: 500px; height: 14px; margin-top: 3px; background: #e9eaef; display: flex; align-items: center; padding: 0 7px; }
.hthumb { width: 425px; height: 12px; margin-left: 10px; border-radius: 6px; background: #d3d6de; }
.right { margin-left: auto; }
.status { height: 29px; border-top: 1px solid #dfe1e6; display: flex; align-items: center; padding-left: 838px; background: #f5f6f8; }
.zoom { width: 34px; font-size: 12.200px; color: #2b3240; }
```
FILE: app.js
```js
const products = [
  ["Customizable Desk (CONF", "5.0 ₹", 12, 45],
  ["Customizable Desk (CONF", "5.0 ₹", 34, 37],
  ["Customizable Desk (CONF", "5.0 ₹", 44, 38],
  ["Corner Desk Right Sit", "147.0 ₹", 23, 16],
  ["Storage Box", "79.0 ₹", 66, 18],
  ["Large Desk", "1799.0 ₹", 90, 19],
  ["Pedal Bin", "47.0 ₹", 76, 20],
  ["Cabinet with Doors", "14.0 ₹", 12, 21],
  ["Conference Chair (CONF", "16.5 ₹", "0", 23],
  ["Conference Chair (CONF", "22.900000000000002 ₹", "0", 24],
  ["Customizable Desk (CONF", "5.0 ₹", "0", 12],
  ["Customizable Desk (CONF", "5.0 ₹", "0", 13],
  ["Customizable Desk (CONF", "55.4 ₹", "0", 14],
  ["Office Chair Black", "12.5 ₹", "0", 25],
  ["Individual Workplace", "885.0 ₹", "0", 30],
  ["Corner Desk Black", "85.0 ₹", "0", 26],
  ["Acoustic Bloc Screens", "7.0 ₹", "0", 31],
  ["Large Meeting Table", "40000.0 ₹", "0", 34],
  ["Desk Combination", "450.0 ₹", "0", 8],
  ["Desk Stand with Screen", "2100.0 ₹", "0", 29],
  ["Four Person Desk", "23500.0 ₹", "0", 33]
];
const cell = (v, flag) => {
  const cls = typeof v === "number" ? " r" : flag ? " flag" : "";
  return `<div class="cell${cls}"><span>${v}</span></div>`;
};
const blanks = '<div class="cell"></div>'.repeat(6);
const letters = [..."ABCDEFGHIJK"].map(l => `<div class="letter${l === "H" ? " on" : ""}">${l}</div>`).join("");
let html = `<div class="grid-row letters"><div class="letter corner"><svg width="10" height="10" viewBox="0 0 10 10"><path d="M10 0v10H0z" fill="#b5b7bb"/></svg></div>${letters}</div>`;
html += `<div class="grid-row first"><div class="num">1</div>${["Product Name", "Description", "Price", "Quantity to Order", "Product ID"].map(h => cell(h)).join("")}${blanks}</div>`;
products.forEach(([name, price, qty, id], i) => {
  const n = i + 2;
  html += `<div class="grid-row"><div class="num${n === 10 ? " on" : ""}">${n}</div>${cell(name)}${cell(name)}${cell(price)}${cell(qty, true)}${cell(id)}${blanks}</div>`;
});
document.getElementById("grid").innerHTML = html;
```
